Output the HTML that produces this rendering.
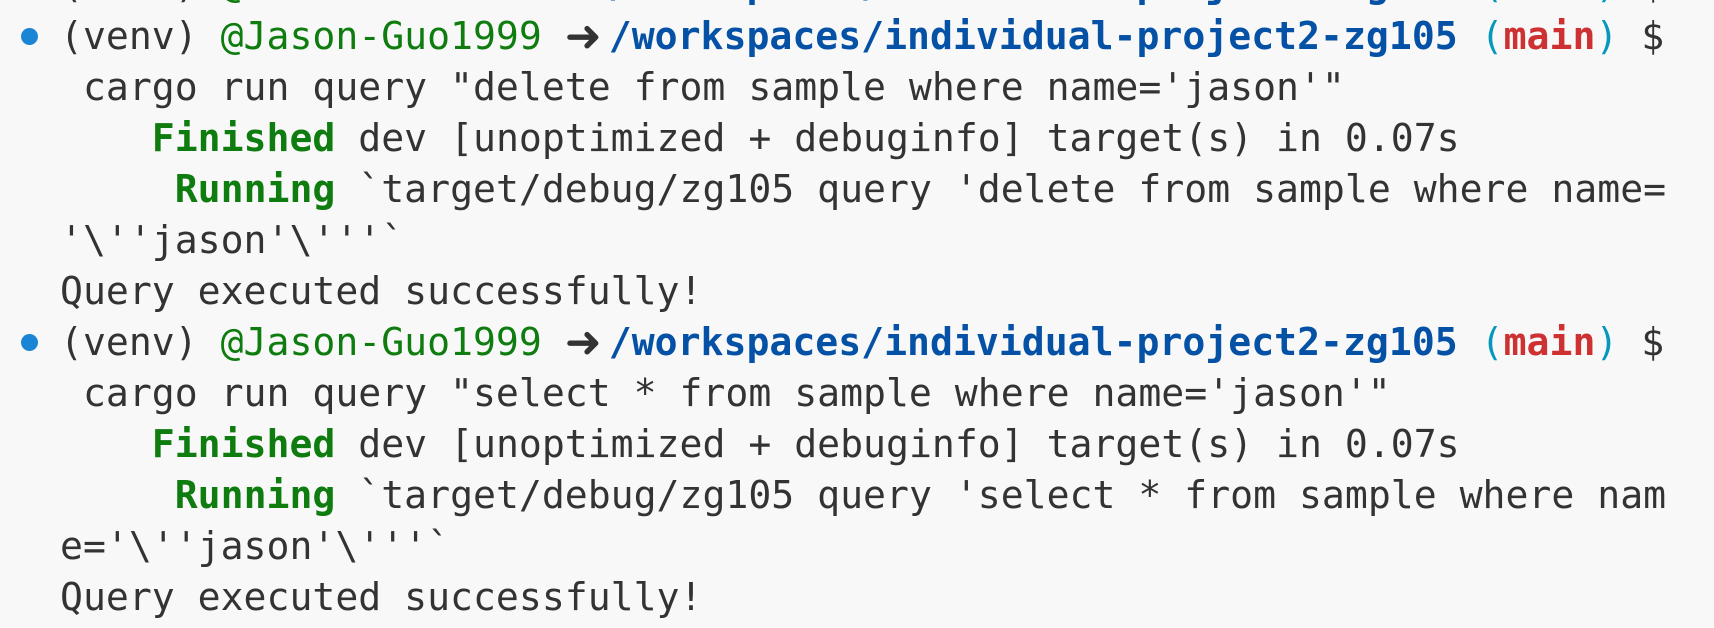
<!DOCTYPE html>
<html><head><meta charset="utf-8"><style>
html,body{margin:0;padding:0;background:#f8f8f8;width:1714px;height:628px;overflow:hidden}
.l{position:absolute;left:60px;height:51px;line-height:51px;white-space:pre;font-family:"DejaVu Sans Mono","Liberation Mono",monospace;font-size:38.12px;color:#333}
.g{color:#0e7c0e}
.gb{color:#0e7c0e;font-weight:bold}
.b{color:#0451a5;font-weight:bold}
.r{color:#cd3131;font-weight:bold}
.t{color:#0598bc}
.a{display:inline-block;width:44px;font-weight:bold;color:#333;font-size:44px;vertical-align:top;font-family:"DejaVu Sans",sans-serif}
.dot{position:absolute;left:21px;width:17px;height:17px;border-radius:50%;background:#1a85d4}
</style></head><body>
<div class="l" style="top:-41px">(venv) <span class="g">@Jason-Guo1999</span> <span class="a">➜</span><span class="b">/workspaces/individual-project2-zg105</span> <span class="t">(</span><span class="r">main</span><span class="t">)</span> $</div>
<div class="dot" style="top:28px"></div>
<div class="l" style="top:11px">(venv) <span class="g">@Jason-Guo1999</span> <span class="a">➜</span><span class="b">/workspaces/individual-project2-zg105</span> <span class="t">(</span><span class="r">main</span><span class="t">)</span> $</div>
<div class="l" style="top:62px"> cargo run query "delete from sample where name='jason'"</div>
<div class="l" style="top:113px">    <span class="gb">Finished</span> dev [unoptimized + debuginfo] target(s) in 0.07s</div>
<div class="l" style="top:164px">     <span class="gb">Running</span> `target/debug/zg105 query 'delete from sample where name=</div>
<div class="l" style="top:215px">'\''jason'\'''`</div>
<div class="l" style="top:266px">Query executed successfully!</div>
<div class="dot" style="top:334px"></div>
<div class="l" style="top:317px">(venv) <span class="g">@Jason-Guo1999</span> <span class="a">➜</span><span class="b">/workspaces/individual-project2-zg105</span> <span class="t">(</span><span class="r">main</span><span class="t">)</span> $</div>
<div class="l" style="top:368px"> cargo run query "select * from sample where name='jason'"</div>
<div class="l" style="top:419px">    <span class="gb">Finished</span> dev [unoptimized + debuginfo] target(s) in 0.07s</div>
<div class="l" style="top:470px">     <span class="gb">Running</span> `target/debug/zg105 query 'select * from sample where nam</div>
<div class="l" style="top:521px">e='\''jason'\'''`</div>
<div class="l" style="top:572px">Query executed successfully!</div>
</body></html>
